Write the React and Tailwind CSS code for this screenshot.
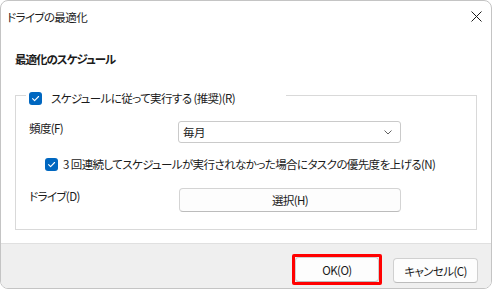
import React from "react";

function Check({ className = "" }) {
  return (
    <span className={"inline-flex w-[13px] h-[13px] shrink-0 items-center justify-center rounded-[3px] bg-[#0067c0] " + className}>
      <svg width="13" height="13" viewBox="0 0 13 13">
        <path d="M3.6 6.7 L5.6 8.7 L9.6 4.5" fill="none" stroke="#ffffff" strokeWidth="1.1" strokeLinecap="round" strokeLinejoin="round" />
      </svg>
    </span>
  );
}

export default function App() {
  return (
    <div className="w-[492px] h-[289px] bg-white font-['Noto_Sans_CJK_JP',sans-serif] [font-feature-settings:'palt'] text-[11.5px] tracking-[-0.6px] leading-[16px] text-[#1b1b1b]">
      <div className="w-full h-full border border-[#c4c4c4] rounded-[8px] overflow-hidden flex flex-col">
        {/* title bar */}
        <div className="h-[31px] shrink-0 flex items-center justify-between pl-[6px] pr-[9px]">
          <span>ドライブの最適化</span>
          <svg width="11" height="11" viewBox="0 0 11 11">
            <path d="M0.5 0.5 L10.5 10.5 M10.5 0.5 L0.5 10.5" stroke="#1b1b1b" strokeWidth="1" />
          </svg>
        </div>
        {/* body */}
        <div className="flex-1 flex flex-col">
          <div className="pl-[14px] mt-[19px] font-bold tracking-[-1px]">最適化のスケジュール</div>
          <fieldset className="mx-[14px] mt-[18px] border border-[#d9d9d9] pb-[17px]">
            <legend className="ml-[10px] w-[260px] h-[20px] pt-[6px] pl-[3px] flex items-center gap-[9px]">
              <Check />
              <span>スケジュールに従って実行する (推奨)(R)</span>
            </legend>
            <div className="flex items-start pl-[13px] mt-[16px]">
              <span className="w-[149px] mt-[-1px]">頻度(F)</span>
              <div className="w-[223px] h-[22px] border border-[#cacaca] rounded-[3px] flex items-center justify-between pl-[4px] pr-[8px] bg-white">
                <span>毎月</span>
                <svg width="8" height="5" viewBox="0 0 8 5">
                  <path d="M0.5 0.5 L4 4 L7.5 0.5" fill="none" stroke="#606060" strokeWidth="1" />
                </svg>
              </div>
            </div>
            <div className="flex items-center pl-[29px] mt-[13px] gap-[5px]">
              <Check />
              <span>3 回連続してスケジュールが実行されなかった場合にタスクの優先度を上げる(N)</span>
            </div>
            <div className="flex items-start pl-[13px] mt-[16px]">
              <span className="w-[150px]">ドライブ(D)</span>
              <button className="w-[222px] h-[24px] border border-[#d4d4d4] border-b-[#bcbcbc] rounded-[4px] bg-[#fdfdfd] flex items-center justify-center">
                選択(H)
              </button>
            </div>
          </fieldset>
        </div>
        {/* footer */}
        <div className="h-[45px] shrink-0 bg-[#efefef] border-t border-[#e0e0e0] flex items-start justify-end pt-[10px] pr-[13px] gap-[11px]">
          <div className="border-[3px] border-[#ff0000] rounded-[2px]">
            <button className="w-[84px] h-[25px] border border-[#d0d0d0] border-b-[#bcbcbc] rounded-[4px] bg-[#fdfdfd] flex items-center justify-center">
              OK(O)
            </button>
          </div>
          <button className="mt-[4px] w-[85px] h-[25px] border border-[#d0d0d0] border-b-[#bcbcbc] rounded-[4px] bg-[#fdfdfd] flex items-center justify-center">
            キャンセル(C)
          </button>
        </div>
      </div>
    </div>
  );
}
